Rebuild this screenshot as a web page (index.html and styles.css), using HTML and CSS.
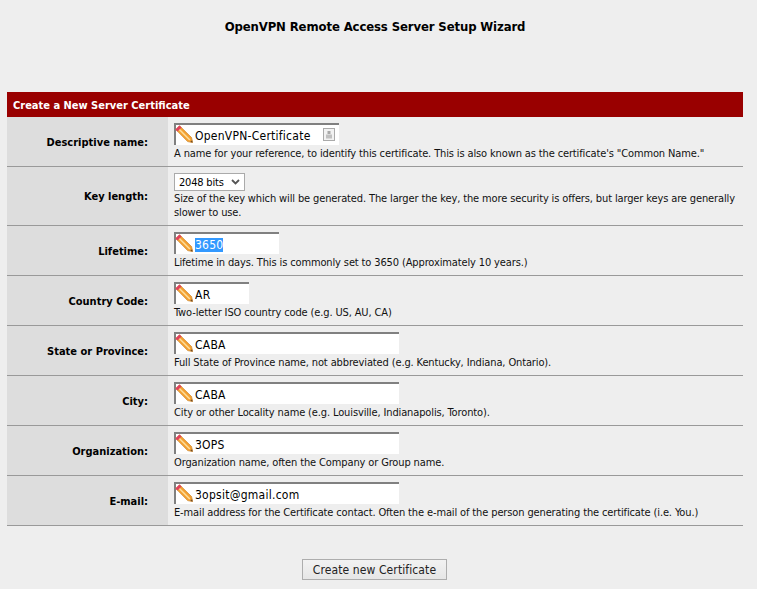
FILE: index.html
```html
<!DOCTYPE html>
<html lang="en">
<head>
    <meta charset="UTF-8">
    <title>OpenVPN Remote Access Server Setup Wizard</title>
    <link rel="stylesheet" href="styles.css">
</head>
<body>
    <svg class="defs" width="0" height="0">
        <symbol id="pencil" viewBox="0 0 18 18">
            <path d="M4.6 .8 16.6 12.6 17.6 17.6 12.6 16.6 .8 4.6Z" fill="#f4a030" stroke="#cf8a30" stroke-width=".7"/>
            <path d="M3.6 3.8 14.8 15" stroke="#fcdc98" stroke-width="1.6" fill="none"/>
            <path d="M4.4 .4 .4 4.4 2.4 6.6 6.6 2.4Z" fill="#e0405c"/>
            <path d="M15.2 17.1 17.1 15.2 17.6 17.6Z" fill="#6b4a2a"/>
        </symbol>
    </svg>
    <h1 class="title">OpenVPN Remote Access Server Setup Wizard</h1>
    <div class="panel">
        <div class="panel-head">Create a New Server Certificate</div>

        <div class="row">
            <div class="label">Descriptive name:</div>
            <div class="cell">
                <div class="field w-name">
                    <svg class="pencil"><use href="#pencil"/></svg>
                    <input value="OpenVPN-Certificate">
                    <svg class="autofill" width="12" height="13" viewBox="0 0 12 13">
                        <rect x=".5" y=".5" width="11" height="12" fill="#f2f2f2" stroke="#aaa"/>
                        <rect x="4.5" y="3" width="3" height="3" fill="#a8a8a8"/>
                        <rect x="3" y="6.5" width="6" height="4" fill="#c0c0c0"/>
                    </svg>
                </div>
                <div class="help">A name for your reference, to identify this certificate. This is also known as the certificate's "Common Name."</div>
            </div>
        </div>

        <div class="row">
            <div class="label">Key length:</div>
            <div class="cell">
                <div class="select-box">2048 bits
                    <svg class="chev" width="9" height="6" viewBox="0 0 9 6"><path d="M1 1 4.5 4.5 8 1" fill="none" stroke="#555" stroke-width="1.8"/></svg>
                </div>
                <div class="help">Size of the key which will be generated. The larger the key, the more security is offers, but larger keys are generally slower to use.</div>
            </div>
        </div>

        <div class="row">
            <div class="label">Lifetime:</div>
            <div class="cell">
                <div class="field w-life">
                    <svg class="pencil"><use href="#pencil"/></svg>
                    <input id="lifetime" value="3650">
                </div>
                <div class="help">Lifetime in days. This is commonly set to 3650 (Approximately 10 years.)</div>
            </div>
        </div>

        <div class="row">
            <div class="label">Country Code:</div>
            <div class="cell">
                <div class="field w-code">
                    <svg class="pencil"><use href="#pencil"/></svg>
                    <input value="AR">
                </div>
                <div class="help">Two-letter ISO country code (e.g. US, AU, CA)</div>
            </div>
        </div>

        <div class="row">
            <div class="label">State or Province:</div>
            <div class="cell">
                <div class="field">
                    <svg class="pencil"><use href="#pencil"/></svg>
                    <input value="CABA">
                </div>
                <div class="help">Full State of Province name, not abbreviated (e.g. Kentucky, Indiana, Ontario).</div>
            </div>
        </div>

        <div class="row">
            <div class="label">City:</div>
            <div class="cell">
                <div class="field">
                    <svg class="pencil"><use href="#pencil"/></svg>
                    <input value="CABA">
                </div>
                <div class="help">City or other Locality name (e.g. Louisville, Indianapolis, Toronto).</div>
            </div>
        </div>

        <div class="row">
            <div class="label">Organization:</div>
            <div class="cell">
                <div class="field">
                    <svg class="pencil"><use href="#pencil"/></svg>
                    <input value="3OPS">
                </div>
                <div class="help">Organization name, often the Company or Group name.</div>
            </div>
        </div>

        <div class="row">
            <div class="label">E-mail:</div>
            <div class="cell">
                <div class="field">
                    <svg class="pencil"><use href="#pencil"/></svg>
                    <input value="3opsit@gmail.com">
                </div>
                <div class="help">E-mail address for the Certificate contact. Often the e-mail of the person generating the certificate (i.e. You.)</div>
            </div>
        </div>
    </div>

    <div class="actions">
        <button class="btn">Create new Certificate</button>
    </div>

    <script>
        document.getElementById('lifetime').select()
    </script>
</body>
</html>
```
FILE: styles.css
```css
body{
    margin: 0;
    padding: 0 14px 0 7px;
    background: #eee;
    color: #000;
    font-family: "DejaVu Sans", "Noto Sans", sans-serif;
    font-stretch: condensed;
    font-size: 11px;
}
.defs{
    display: block;
    height: 0;
}
.title{
    margin: 0;
    padding-top: 19px;
    box-sizing: border-box;
    height: 92px;
    font-size: 13px;
    line-height: 16px;
    letter-spacing: -0.12px;
    text-align: center;
}
.panel-head{
    height: 25px;
    box-sizing: border-box;
    padding: 1px 0 0 6px;
    line-height: 25px;
    background: #990000;
    color: #fff;
    font-weight: bold;
}
.row{
    display: grid;
    grid-template-columns: 161px 1fr;
    border-bottom: 1px solid #999;
}
.label{
    display: flex;
    align-items: center;
    justify-content: flex-end;
    padding: 1px 20px 0 0;
    background: #ddd;
    font-weight: bold;
}
.cell{
    padding: 6px 6px 5px 6px;
}
.help{
    color: #111;
    line-height: 14px;
    letter-spacing: -0.13px;
}
.field{
    position: relative;
    width: 225px;
    height: 22px;
    margin-bottom: 2px;
    box-sizing: border-box;
    border-top: 2px solid #808080;
    border-left: 2px solid #808080;
    background: #fff;
}
.w-name{
    width: 165px;
}
.w-life{
    width: 105px;
}
.w-code{
    width: 75px;
}
.field input{
    display: block;
    width: 100%;
    height: 100%;
    box-sizing: border-box;
    border: 0;
    outline: 0;
    padding: 1px 0 0 19px;
    background: transparent;
    font-family: "DejaVu Sans", "Noto Sans", sans-serif;
    font-stretch: condensed;
    font-size: 12px;
    letter-spacing: 0.25px;
    color: #000;
}
.field input::selection{
    background: #3399ff;
    color: #fff;
}
.pencil{
    position: absolute;
    left: -1px;
    top: 0;
    width: 18px;
    height: 18px;
}
.autofill{
    position: absolute;
    right: 4px;
    top: 3px;
}
.select-box{
    display: flex;
    align-items: center;
    justify-content: space-between;
    width: 71px;
    height: 18px;
    margin-bottom: 1px;
    box-sizing: border-box;
    padding: 0 4px;
    border: 1px solid #aaa;
    background: #fff;
    letter-spacing: -0.19px;
}
.actions{
    padding-top: 33px;
    padding-left: 295px;
}
.btn{
    width: 145px;
    height: 21px;
    padding: 0;
    border: 1px solid #adadad;
    background: linear-gradient(#f2f2f2, #e6e6e6);
    color: #222;
    font-family: "DejaVu Sans", "Noto Sans", sans-serif;
    font-stretch: condensed;
    font-size: 12px;
    letter-spacing: 0.1px;
}
```
